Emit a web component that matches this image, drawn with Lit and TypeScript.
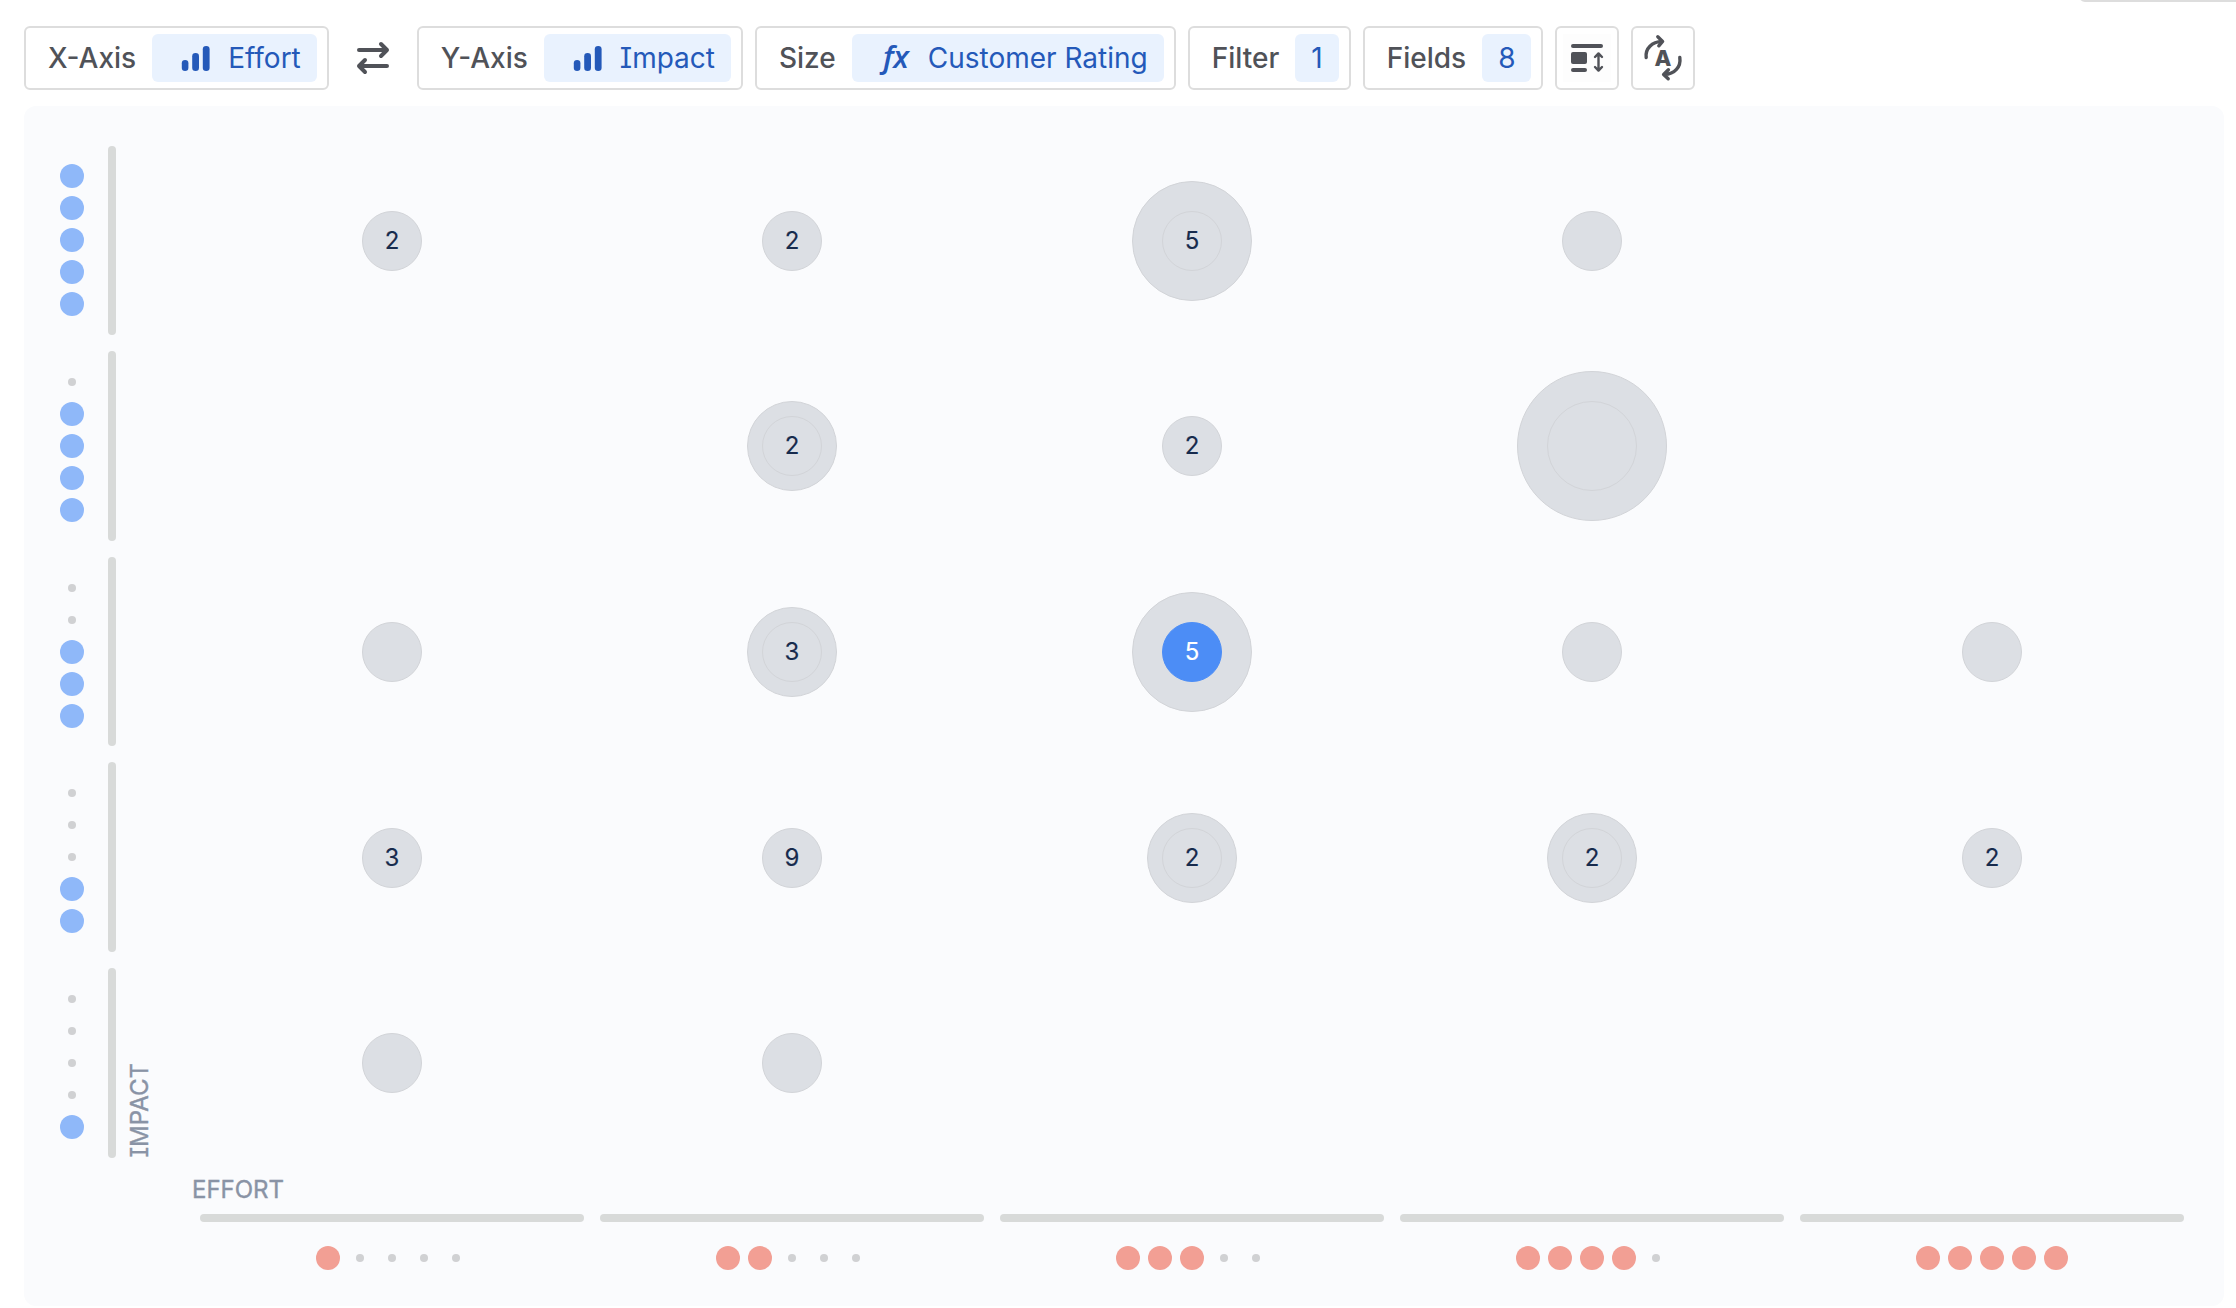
import { LitElement, html, css, nothing } from "lit";
import { customElement, property } from "lit/decorators.js";
import { classMap } from "lit/directives/class-map.js";

type Bubble = { count?: number; outer: number; inner?: number; selected?: boolean };

const LEVELS = [1, 2, 3, 4, 5];

// Rows run from the highest impact to the lowest, columns from the lowest effort up.
const CELLS: (Bubble | null)[][] = [
  [{ outer: 60, count: 2 }, { outer: 60, count: 2 }, { outer: 120, inner: 60, count: 5 }, { outer: 60 }, null],
  [null, { outer: 90, inner: 60, count: 2 }, { outer: 60, count: 2 }, { outer: 150, inner: 90 }, null],
  [{ outer: 60 }, { outer: 90, inner: 60, count: 3 }, { outer: 120, inner: 60, count: 5, selected: true }, { outer: 60 }, { outer: 60 }],
  [{ outer: 60, count: 3 }, { outer: 60, count: 9 }, { outer: 90, inner: 60, count: 2 }, { outer: 90, inner: 60, count: 2 }, { outer: 60, count: 2 }],
  [{ outer: 60 }, { outer: 60 }, null, null, null],
];

const barsIcon = html`<svg width="40" height="48" viewBox="0 0 40 48" fill="currentColor">
  <rect x="5.8" y="26" width="6.6" height="11" rx="3.3" />
  <rect x="16.2" y="19" width="6.8" height="18" rx="3.3" />
  <rect x="26.8" y="12" width="6.8" height="25" rx="3.3" />
</svg>`;

const formulaIcon = html`<svg width="40" height="48" viewBox="0 0 40 48" fill="currentColor">
  <text class="fx" x="7 17.2" y="33.6">fx</text>
</svg>`;

const swapIcon = html`<svg width="64" height="64" viewBox="0 0 64 64" fill="none" stroke="currentColor" stroke-width="4" stroke-linecap="round" stroke-linejoin="round">
  <path d="M18 24H46M40 18L46 24L40 30M46 40H18M24 34L18 40L24 46" />
</svg>`;

const cardSizeIcon = html`<svg width="48" height="48" viewBox="0 0 48 48">
  <rect width="48" height="48" fill="#fdfdfd" />
  <g fill="currentColor">
    <rect x="8" y="10" width="32" height="4" rx="2" />
    <rect x="8" y="18" width="16" height="12" rx="2" />
    <rect x="8" y="34" width="16" height="4" rx="2" />
  </g>
  <path d="M35.5 20V36M32 23L35.5 19.4L39 23M32 33L35.5 36.6L39 33" fill="none" stroke="currentColor" stroke-width="2.4" stroke-linecap="round" stroke-linejoin="round" />
</svg>`;

const autoIcon = html`<svg width="48" height="48" viewBox="0 0 48 48">
  <g fill="none" stroke="currentColor" stroke-width="3.4" stroke-linecap="round" stroke-linejoin="round">
    <path d="M7.2 23.5C6.1 14.5 13 7.8 23 7.4M18.8 2.8L23.6 7.4L19.8 11.8" />
    <path d="M40.8 23.5C42.2 33 35.5 40.2 25.5 40.5M29.4 35.8L24.6 40.5L29.2 44.8" />
  </g>
  <text class="auto" x="24" y="32" text-anchor="middle" fill="currentColor">A</text>
</svg>`;

@customElement("rating-dots")
class RatingDots extends LitElement {
  @property({ type: Number }) value = 0;
  @property({ type: Boolean, reflect: true }) vertical = false;

  static styles = css`
    :host { display: flex; gap: 8px; align-items: center; justify-content: center; color: #f29f94; }
    :host([vertical]) { flex-direction: column-reverse; color: #8fb8f9; }
    .slot { width: 24px; height: 24px; display: flex; align-items: center; justify-content: center; }
    .dot { width: 8px; height: 8px; border-radius: 50%; background: #d0d1d3; }
    .on { width: 24px; height: 24px; background: currentColor; }
  `;

  render() {
    return LEVELS.map(
      (n) => html`<span class="slot"><span class=${classMap({ dot: true, on: n <= this.value })}></span></span>`
    );
  }
}

@customElement("app-root")
class AppRoot extends LitElement {
  static styles = css`
    :host {
      display: block; position: relative; height: 1308px; overflow: hidden; box-sizing: border-box;
      padding: 26px 12px 0 24px; background: #fff; color: #505258;
      font-family: Inter, "Liberation Sans", sans-serif; font-size: 28px; font-weight: 500;
      font-feature-settings: "cv08";
    }
    * { box-sizing: border-box; }
    svg { display: block; flex: none; }
    .popover { position: absolute; right: -20px; top: -30px; width: 177px; height: 32px; border: 2px solid #ddd; border-radius: 6px; }
    .toolbar { display: flex; gap: 12px; height: 64px; }
    .box { display: flex; align-items: center; gap: 16px; height: 64px; padding: 0 10px 0 22px; border: 2px solid #ddd; border-radius: 6px; white-space: nowrap; }
    .icon-box { width: 64px; padding: 0; justify-content: center; }
    .pill { display: flex; align-items: center; gap: 12px; height: 48px; padding: 0 16px; border-radius: 6px; background: #e9f2fe; color: #2459b9; font-weight: 400; }
    .pill.field { padding-left: 24px; }
    .fx { font: italic 600 31px "Open Sans", "Noto Sans", sans-serif; }
    .auto { font: 800 22px Inter, sans-serif; }
    .panel { display: flex; flex-direction: column; height: 1200px; margin-top: 16px; padding: 39.6px 40px 0 36px; border-radius: 12px; background: #fafbfd; }
    .chart { display: flex; height: 1012px; }
    .y-axis { display: grid; grid-template-rows: repeat(5, 1fr); row-gap: 16px; width: 56px; }
    .y-step { display: flex; gap: 24px; align-items: center; }
    .y-bar { width: 8px; height: 100%; border-radius: 4px; background: #d8dad9; }
    .axis-name { font-size: 24px; line-height: 30px; font-weight: 400; color: #8993a5; -webkit-text-stroke: 0.4px currentColor; }
    .y-name { width: 84px; display: flex; align-items: flex-end; padding-left: 9px; }
    .y-name .axis-name { writing-mode: vertical-rl; transform: rotate(180deg); }
    .plot { flex: 1; display: grid; grid-template: repeat(5, 1fr) / repeat(5, 1fr); gap: 16px; margin: 0.4px 0 -0.4px; }
    .cell { display: flex; align-items: center; justify-content: center; min-height: 0; }
    .bubble { flex: none; display: flex; align-items: center; justify-content: center; border-radius: 50%; border: 1px solid #d2d4d8; background: #dcdfe4; color: #172b4d; font-size: 24px; font-weight: 400; line-height: 1; -webkit-text-stroke: 0.15px currentColor; }
    .selected { background: #4c8df6; border-color: #4c8df6; color: #fff; }
    .x-axis { padding-left: 140px; }
    .x-name { margin: 17px 0 9px -8px; }
    .x-steps { display: grid; grid-template-columns: repeat(5, 1fr); gap: 16px; }
    .x-step { display: flex; flex-direction: column; gap: 24px; }
    .x-bar { height: 8px; border-radius: 4px; background: #d8dad9; }
  `;

  private bubble(b: Bubble) {
    const text = b.count ?? nothing;
    if (!b.inner) return html`<div class="bubble" style="width:${b.outer}px;height:${b.outer}px">${text}</div>`;
    return html`<div class="bubble" style="width:${b.outer}px;height:${b.outer}px">
      <div class=${classMap({ bubble: true, selected: !!b.selected })} style="width:${b.inner}px;height:${b.inner}px">${text}</div>
    </div>`;
  }

  private field(label: string, icon: unknown, value: string) {
    return html`<div class="box"><span>${label}</span><span class="pill field">${icon}<span>${value}</span></span></div>`;
  }

  private counter(label: string, n: number) {
    return html`<div class="box"><span>${label}</span><span class="pill">${n}</span></div>`;
  }

  render() {
    return html`
      <div class="popover"></div>
      <div class="toolbar">
        ${this.field("X-Axis", barsIcon, "Effort")} ${swapIcon}
        ${this.field("Y-Axis", barsIcon, "Impact")}
        ${this.field("Size", formulaIcon, "Customer Rating")}
        ${this.counter("Filter", 1)} ${this.counter("Fields", 8)}
        <div class="box icon-box">${cardSizeIcon}</div>
        <div class="box icon-box">${autoIcon}</div>
      </div>
      <div class="panel">
        <div class="chart">
          <div class="y-axis">
            ${[5, 4, 3, 2, 1].map((n) => html`<div class="y-step"><rating-dots vertical .value=${n}></rating-dots><div class="y-bar"></div></div>`)}
          </div>
          <div class="y-name"><span class="axis-name">IMPACT</span></div>
          <div class="plot">
            ${CELLS.flat().map((c) => html`<div class="cell">${c ? this.bubble(c) : nothing}</div>`)}
          </div>
        </div>
        <div class="x-axis">
          <div class="axis-name x-name">EFFORT</div>
          <div class="x-steps">
            ${LEVELS.map((n) => html`<div class="x-step"><div class="x-bar"></div><rating-dots .value=${n}></rating-dots></div>`)}
          </div>
        </div>
      </div>
    `;
  }
}
